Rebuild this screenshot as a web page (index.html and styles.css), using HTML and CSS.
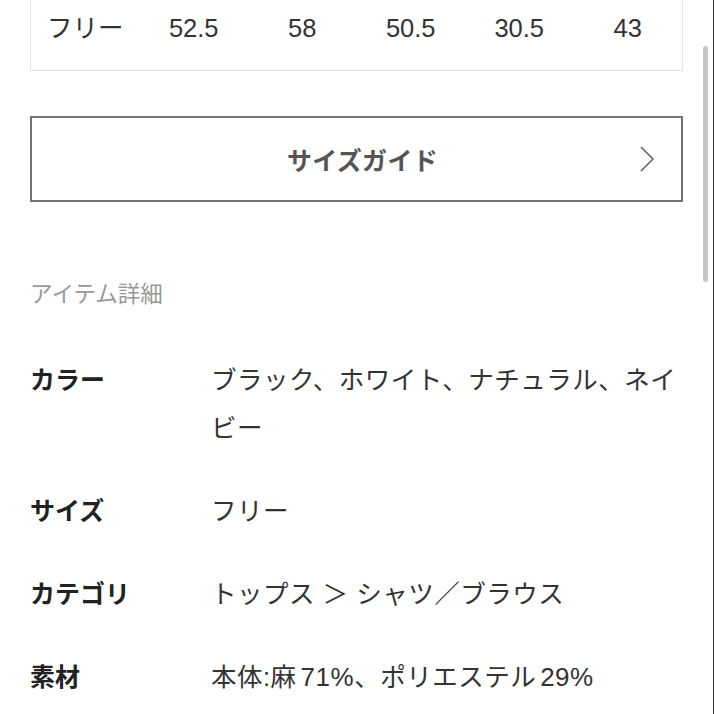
FILE: index.html
```html
<!DOCTYPE html>
<html lang="ja">
<head>
<meta charset="utf-8">
<link rel="stylesheet" href="styles.css">
</head>
<body>
<div class="page">
  <div class="size-card">
    <div class="size-row">
      <span class="cell">フリー</span>
      <span class="cell">52.5</span>
      <span class="cell">58</span>
      <span class="cell">50.5</span>
      <span class="cell">30.5</span>
      <span class="cell">43</span>
    </div>
  </div>

  <a class="guide-btn">
    <span class="guide-label">サイズガイド</span>
    <svg class="chevron" width="16" height="28" viewBox="0 0 16 28"><path d="M2 2 L14 14 L2 26" fill="none" stroke="#666" stroke-width="1.6"/></svg>
  </a>

  <h2 class="section-title">アイテム詳細</h2>

  <dl class="details">
    <div class="detail-row">
      <dt class="label">カラー</dt>
      <dd class="value">ブラック、ホワイト、ナチュラル、ネイビー</dd>
    </div>
    <div class="detail-row">
      <dt class="label">サイズ</dt>
      <dd class="value">フリー</dd>
    </div>
    <div class="detail-row">
      <dt class="label">カテゴリ</dt>
      <dd class="value">トップス ＞ シャツ／ブラウス</dd>
    </div>
    <div class="detail-row">
      <dt class="label">素材</dt>
      <dd class="value">本体:麻<span class="num">71%</span>、ポリエステル<span class="num">29%</span></dd>
    </div>
  </dl>
</div>
<div class="scrollbar"></div>
<div class="edge"></div>
</body>
</html>
```

FILE: styles.css
```css
html, body {
  margin: 0;
  padding: 0;
  background: #fff;
  overflow: hidden;
}
body {
  font-family: "Liberation Sans", "Noto Sans CJK JP", sans-serif;
  color: #333;
  width: 714px;
  height: 714px;
  position: relative;
}
.page {
  padding: 0 31px 0 30px;
}
.size-card {
  border: 1px solid #e2e2e2;
  border-top: none;
}
.size-row {
  display: grid;
  grid-template-columns: repeat(6, 1fr);
  padding: 10px 0 24px;
  font-size: 25.5px;
  line-height: 36px;
  color: #333;
}
.cell {
  text-align: center;
}
.guide-btn {
  margin-top: 45px;
  height: 86px;
  box-sizing: border-box;
  border: 2px solid #727272;
  display: flex;
  align-items: center;
  justify-content: center;
  position: relative;
}
.guide-label {
  font-size: 25px;
  font-weight: bold;
  color: #555;
  letter-spacing: 0.3px;
  padding-left: 12px;
}
.chevron {
  position: absolute;
  right: 26px;
  top: 27px;
}
.section-title {
  margin: 78px 0 0;
  font-size: 22.5px;
  line-height: 30px;
  font-weight: normal;
  color: #999;
}
.details {
  margin: 46px 0 0;
  display: flex;
  flex-direction: column;
  gap: 35px;
}
.detail-row {
  display: flex;
}
.label {
  width: 182px;
  flex: none;
  margin: 0;
  font-size: 25px;
  line-height: 48px;
  font-weight: bold;
  color: #222;
}
.value {
  margin: 0 0 0 -1px;
  flex: 1;
  font-size: 25.5px;
  letter-spacing: 0.5px;
  line-height: 48px;
  color: #333;
}
.num {
  margin-left: 4px;
  font-size: 26px;
}
.scrollbar {
  position: absolute;
  left: 703px;
  top: 46px;
  width: 5px;
  height: 236px;
  border-radius: 3px;
  background: #c6c6c6;
}
.edge {
  position: absolute;
  right: 0;
  top: 0;
  width: 1px;
  height: 714px;
  background: #333;
}
```
